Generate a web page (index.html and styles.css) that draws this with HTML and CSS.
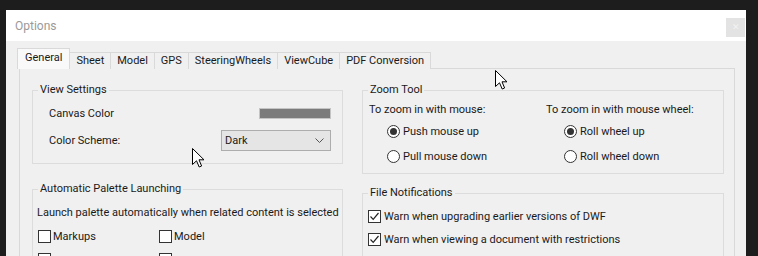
FILE: index.html
```html
<!DOCTYPE html>
<html lang="en">
<head>
  <meta charset="UTF-8" />
  <title>Options</title>
  <link rel="stylesheet" href="styles.css">
</head>
<body>
  <div class="window">
    <div class="titlebar">
      <span class="title">Options</span>
      <span class="close">&#x2715;</span>
    </div>

    <div class="dialog">
      <div class="tabs">
        <div class="tab active">General</div>
        <div class="tab">Sheet</div>
        <div class="tab">Model</div>
        <div class="tab">GPS</div>
        <div class="tab">SteeringWheels</div>
        <div class="tab">ViewCube</div>
        <div class="tab">PDF Conversion</div>
      </div>

      <div class="panel">
        <div class="col col-left">
          <fieldset class="group">
            <legend>View Settings</legend>
            <div class="view-body">
              <div class="row">
                <span>Canvas Color</span>
                <span class="swatch"></span>
              </div>
              <div class="row">
                <span>Color Scheme:</span>
                <div class="select">
                  <span>Dark</span>
                  <svg width="9" height="5" viewBox="0 0 9 5"><path d="M0.5 0.5 L4.5 4.5 L8.5 0.5" fill="none" stroke="#555" stroke-width="1"/></svg>
                </div>
              </div>
            </div>
          </fieldset>

          <fieldset class="group group-palette">
            <legend>Automatic Palette Launching</legend>
            <div class="palette-body">
              <div class="line">Launch palette automatically when related content is selected</div>
              <div class="check-grid">
                <label class="check"><span class="box"></span>Markups</label>
                <label class="check"><span class="box"></span>Model</label>
                <label class="check"><span class="box"></span></label>
                <label class="check"><span class="box"></span></label>
              </div>
            </div>
          </fieldset>
        </div>

        <div class="col col-right">
          <fieldset class="group">
            <legend>Zoom Tool</legend>
            <div class="zoom-body">
              <div class="zoom-col">
                <div class="line">To zoom in with mouse:</div>
                <label class="radio"><span class="dot on"></span>Push mouse up</label>
                <label class="radio"><span class="dot"></span>Pull mouse down</label>
              </div>
              <div class="zoom-col">
                <div class="line">To zoom in with mouse wheel:</div>
                <label class="radio"><span class="dot on"></span>Roll wheel up</label>
                <label class="radio"><span class="dot"></span>Roll wheel down</label>
              </div>
            </div>
          </fieldset>

          <fieldset class="group group-files">
            <legend>File Notifications</legend>
            <div class="files-body">
              <label class="check"><span class="box"><svg width="11" height="11" viewBox="0 0 11 11"><path d="M1.5 5.5 L4.2 8.3 L9.5 2" fill="none" stroke="#222" stroke-width="1.2"/></svg></span>Warn when upgrading earlier versions of DWF</label>
              <label class="check"><span class="box"><svg width="11" height="11" viewBox="0 0 11 11"><path d="M1.5 5.5 L4.2 8.3 L9.5 2" fill="none" stroke="#222" stroke-width="1.2"/></svg></span>Warn when viewing a document with restrictions</label>
            </div>
          </fieldset>
        </div>
      </div>
    </div>

    <svg class="cursor cursor-a" width="13" height="20" viewBox="0 0 13 20"><path d="M0.5 0.5 L0.5 16.5 L4.5 12.8 L7.2 19 L9.6 18 L7 11.8 L12 11.8 Z" fill="#fff" stroke="#000" stroke-width="1"/></svg>
    <svg class="cursor cursor-b" width="13" height="20" viewBox="0 0 13 20"><path d="M0.5 0.5 L0.5 16.5 L4.5 12.8 L7.2 19 L9.6 18 L7 11.8 L12 11.8 Z" fill="#fff" stroke="#000" stroke-width="1"/></svg>
  </div>
</body>
</html>
```

FILE: styles.css
```css
:root {
  --desk: #1d1d1d;
  --face: #f0f0f0;
  --line: #dcdcdc;
  --text: #1a1a1a;
  --muted: #9a9a9a;
}

body {
  margin: 0;
  height: 256px;
  overflow: hidden;
  background: var(--desk);
  font-family: 'Roboto', 'Noto Sans', Arial, sans-serif;
  font-size: 11px;
  color: var(--text);
}

.window {
  position: relative;
  width: 740px;
  height: 246px;
  margin: 10px 0 0 6px;
  background: var(--face);
  overflow: hidden;
}

.titlebar {
  display: flex;
  justify-content: space-between;
  align-items: flex-start;
  height: 31px;
  padding: 0 1px 0 9px;
  background: #fff;
}

.title {
  margin-top: 9px;
  font-size: 12px;
  color: var(--muted);
}

.close {
  width: 19px;
  height: 19px;
  margin-top: 8px;
  background: #e3e3e3;
  color: #f2f2f2;
  font-size: 9px;
  line-height: 19px;
  text-align: center;
}

.dialog {
  padding: 7px 12px 0 11px;
}

.tabs {
  display: flex;
  align-items: flex-end;
  height: 21px;
  position: relative;
  z-index: 1;
}

.tab {
  height: 16px;
  line-height: 16px;
  padding: 0 6px;
  border: 1px solid #d9d9d9;
  border-bottom: none;
  margin-left: -1px;
  background: var(--face);
}

.tab.active {
  height: 20px;
  line-height: 18px;
  margin-left: 0;
  padding: 0 7px;
  background: #f9f9f9;
}

.panel {
  display: flex;
  gap: 19px;
  width: 716px;
  height: 200px;
  margin: -1px 0 0 2px;
  padding: 13px 10px 0 12px;
  border: 1px solid #d9d9d9;
  box-sizing: border-box;
}

.col {
  display: flex;
  flex-direction: column;
}

.col-left {
  width: 311px;
  gap: 17px;
}

.col-right {
  width: 362px;
  gap: 11px;
}

.group {
  margin: 0;
  padding: 0;
  border: 1px solid var(--line);
  min-width: 0;
}

.group legend {
  margin-left: 5px;
  padding: 0 2px;
  line-height: 16px;
}

.view-body {
  display: flex;
  flex-direction: column;
  gap: 7px;
  padding: 5px 11px 12px 16px;
}

.row {
  display: flex;
  justify-content: space-between;
  align-items: center;
  height: 20px;
}

.row + .row {
  height: 21px;
}

.swatch {
  width: 70px;
  height: 9px;
  background: #7b7b7b;
  border: 1px solid #c4c4c4;
}

.select {
  display: flex;
  justify-content: space-between;
  align-items: center;
  width: 99px;
  height: 19px;
  padding: 0 6px 0 3px;
  background: #e5e5e5;
  border: 1px solid #adadad;
}

.line {
  line-height: 16px;
  white-space: nowrap;
}

.palette-body {
  padding: 8px 0 0 4px;
}

.check-grid {
  display: grid;
  grid-template-columns: 121px 121px;
  row-gap: 7px;
  margin-top: 7px;
}

.check,
.radio {
  display: flex;
  align-items: center;
  gap: 2px;
  height: 16px;
  white-space: nowrap;
}

.check-grid .check {
  margin-left: 1px;
}

.box {
  display: flex;
  align-items: center;
  justify-content: center;
  width: 11px;
  height: 11px;
  border: 1px solid #333;
  background: #fff;
  flex: none;
}

.zoom-body {
  display: flex;
  padding: 4px 0 9px 6px;
}

.zoom-col {
  width: 180px;
}

.zoom-col .line {
  margin-bottom: 5px;
}

.radio {
  margin-left: 18px;
  gap: 3px;
}

.radio + .radio {
  margin-top: 9px;
}

.dot {
  display: flex;
  align-items: center;
  justify-content: center;
  width: 11px;
  height: 11px;
  border: 1px solid #333;
  border-radius: 50%;
  background: #fff;
  flex: none;
}

.dot.on::after {
  content: "";
  width: 7px;
  height: 7px;
  border-radius: 50%;
  background: #333;
}

.files-body {
  display: flex;
  flex-direction: column;
  gap: 7px;
  padding: 7px 0 12px 5px;
}

.files-body .check {
  gap: 3px;
}

.cursor {
  position: absolute;
}

.cursor-a {
  left: 186px;
  top: 138px;
}

.cursor-b {
  left: 489px;
  top: 60px;
}
```
